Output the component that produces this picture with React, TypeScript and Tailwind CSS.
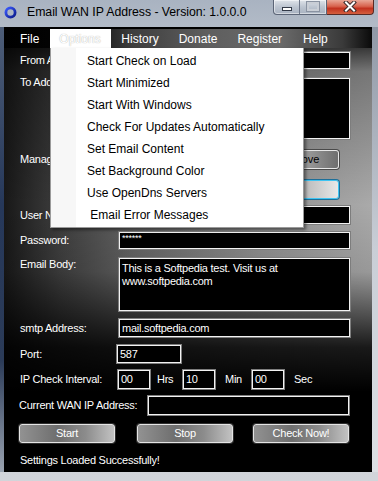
import React from "react";

const inputCls =
  "bg-black text-white border border-[#f2f2f2] shadow-[0_0_0_1px_#7d7d7d] text-[11px] tracking-[-0.25px] leading-[13px] pl-[2px] flex items-center";

const labelCls = "w-[99px] shrink-0 text-white text-[11px] tracking-[-0.25px] leading-[13px] whitespace-nowrap";

const btnCls =
  "h-[19px] w-[96px] flex items-center justify-center rounded-[3px] border border-[#e4e4e4] shadow-[0_0_0_1px_#2e2e2e] bg-[linear-gradient(90deg,#929292_0%,#6e6e6e_40%,#8c8c8c_70%,#c2c2c2_100%)] text-white text-[11px] tracking-[-0.25px]";

const menuItems = [
  "Start Check on Load",
  "Start Minimized",
  "Start With Windows",
  "Check For Updates Automatically",
  "Set Email Content",
  "Set Background Color",
  "Use OpenDns Servers",
  " Email Error Messages",
];

export default function App() {
  return (
    <div className="w-[378px] h-[481px] overflow-hidden flex flex-col font-['Liberation_Sans',Arial,sans-serif] bg-[linear-gradient(180deg,#a9b3c1_0%,#b9c1cc_10%,#c6ccd4_60%,#d2d5da_100%)]">
      {/* Title bar */}
      <div className="h-[27px] flex items-start shrink-0 relative">
        <svg className="mt-[6px] ml-[4px] w-[13px] h-[13px]" viewBox="0 0 13 13">
          <defs>
            <linearGradient id="ring" x1="0" y1="0" x2="1" y2="1">
              <stop offset="0" stopColor="#3b5bff" />
              <stop offset="1" stopColor="#0a1a8a" />
            </linearGradient>
          </defs>
          <circle cx="6.5" cy="6.5" r="4.6" fill="none" stroke="url(#ring)" strokeWidth="2.8" />
        </svg>
        <div className="ml-[10px] mt-[5px] text-[12.3px] leading-[14px] tracking-[-0.05px] text-black whitespace-nowrap">
          Email WAN IP Address - Version: 1.0.0.0
        </div>
        <div className="ml-auto mr-[4px] flex">
          <div className="w-[54px] h-[15px] flex rounded-bl-[4px] border border-t-0 border-[#5c6577] bg-[linear-gradient(180deg,#dfe4ea_0%,#bcc4d0_50%,#a8b2c0_100%)] shadow-[inset_0_0_0_1px_rgba(255,255,255,0.5)]">
            <div className="w-[27px] h-full flex items-center justify-center border-r border-[#6d7688]">
              <div className="w-[10px] h-[4px] mt-[4px] bg-white border border-[#333a48]" />
            </div>
            <div className="w-[27px] h-full flex items-center justify-center">
              <div className="w-[12px] h-[9px] border-2 border-[#c9ced6] shadow-[0_0_0_1px_#8a93a2] mt-[-1px]" />
            </div>
          </div>
          <div className="w-[47px] h-[15px] flex items-center justify-center rounded-br-[4px] border border-t-0 border-l-0 border-[#5a2a24] bg-[linear-gradient(180deg,#e9a796_0%,#d8634e_45%,#c2321f_60%,#d4603f_100%)]">
            <svg width="14" height="11" viewBox="0 0 14 11" className="mt-[-1px]">
              <path d="M3 1.5 L11 9.5 M11 1.5 L3 9.5" stroke="#3a2a2a" strokeWidth="4" strokeLinecap="square" />
              <path d="M3 1.5 L11 9.5 M11 1.5 L3 9.5" stroke="#ffffff" strokeWidth="2" strokeLinecap="square" />
            </svg>
          </div>
        </div>
      </div>

      {/* Body row */}
      <div className="flex h-[445px] shrink-0">
        <div className="w-[4px] bg-[linear-gradient(180deg,#4d5d78_0%,#26385a_40%,#2b3b58_75%,#9aa3b0_100%)]" />
        <div className="w-[368px] h-full relative overflow-visible bg-[linear-gradient(180deg,#000_0%,rgba(0,0,0,0.3)_10%,rgba(0,0,0,0)_40%,rgba(0,0,0,0.1)_55%,rgba(0,0,0,0.85)_72%,#000_82%),linear-gradient(90deg,#181818_0%,#3e3e3e_15%,#646464_35%,#909090_70%,#aaaaaa_100%)]">
          {/* Menu bar */}
          <div className="h-[21px] flex items-center text-white text-[12px] leading-[14px] bg-[linear-gradient(90deg,#000_0%,#050505_20%,#3e3e3e_35%,#5e5e5e_55%,#6a6a6a_75%,#3a3a3a_92%,#0a0a0a_100%)] border-t-[2px] border-black">
            <span className="ml-[16px]">File</span>
            <div className="ml-[11px] h-[19px] w-[61px] self-end bg-white flex items-center pl-[9px] text-white [text-shadow:0_0_1px_#9a9a9a]">
              Options
            </div>
            <span className="ml-[10px]">History</span>
            <span className="ml-[20px]">Donate</span>
            <span className="ml-[20px]">Register</span>
            <span className="ml-[21px]">Help</span>
          </div>

          {/* Form */}
          <div className="pl-[16px] flex flex-col">
            <div className="mt-[4px] h-[17px] flex items-center">
              <div className={labelCls}>From Address:</div>
              <div className={`${inputCls} w-[231px] h-[17px]`} />
            </div>
            <div className="mt-[9px] flex items-start">
              <div className={`${labelCls} mt-[-2px]`}>To Address:</div>
              <div className={`${inputCls} w-[231px] h-[61px]`} />
            </div>
            <div className="mt-[11px] h-[19px] flex items-center">
              <div className={labelCls}>Manage Addresses:</div>
              <div className="ml-[138px] w-[82px] h-[19px] flex items-center justify-center rounded-[3px] border border-[#e6e6e6] shadow-[0_0_0_1px_#4a4a4a] bg-[linear-gradient(90deg,#c8c8c8_0%,#a6a6a6_50%,#6e6e6e_100%)] text-[11px] text-black pl-[2px]">
                Remove
              </div>
            </div>
            <div className="mt-[11px] h-[19px] flex items-center">
              <div className="ml-[237px] w-[82px] h-[19px] rounded-[3px] border border-[#3fc4f2] shadow-[0_0_0_1px_#1d6f99] bg-[linear-gradient(90deg,#d8d8d8_0%,#b2b2b2_50%,#e8e8e8_100%)]" />
            </div>
            <div className="mt-[7px] h-[18px] flex items-center">
              <div className={labelCls}>User Name:</div>
              <div className={`${inputCls} w-[231px] h-[18px]`} />
            </div>
            <div className="mt-[8px] h-[17px] flex items-center">
              <div className={labelCls}>Password:</div>
              <div className={`${inputCls} w-[231px] h-[17px] items-start`}>
                <span className="text-[9px] leading-[9px] mt-[1px]">******</span>
              </div>
            </div>
            <div className="mt-[9px] flex items-start">
              <div className={`${labelCls} mt-[0px]`}>Email Body:</div>
              <div className={`${inputCls} w-[231px] h-[53px] items-start pt-[3px] flex-col`}>
                <span>This is a Softpedia test. Visit us at</span>
                <span>www.softpedia.com</span>
              </div>
            </div>
            <div className="mt-[8px] h-[18px] flex items-center">
              <div className={labelCls}>smtp Address:</div>
              <div className={`${inputCls} w-[231px] h-[18px]`}>mail.softpedia.com</div>
            </div>
            <div className="mt-[8px] h-[18px] flex items-center">
              <div className="w-[97px] shrink-0 text-white text-[11px] tracking-[-0.25px]">Port:</div>
              <div className={`${inputCls} w-[64px] h-[18px]`}>587</div>
            </div>
            <div className="mt-[7px] h-[19px] flex items-center text-white text-[11px] tracking-[-0.25px]">
              <div className="w-[98px] shrink-0">IP Check Interval:</div>
              <div className={`${inputCls} w-[32px] h-[19px]`}>00</div>
              <span className="ml-[7px] w-[26px]">Hrs</span>
              <div className={`${inputCls} w-[32px] h-[19px]`}>10</div>
              <span className="ml-[10px] w-[27px]">Min</span>
              <div className={`${inputCls} w-[32px] h-[19px]`}>00</div>
              <span className="ml-[10px]">Sec</span>
            </div>
            <div className="mt-[7px] h-[19px] flex items-center text-white text-[11px] tracking-[-0.25px]">
              <div className="w-[129px] shrink-0 ml-[-1px]">Current WAN IP Address:</div>
              <div className={`${inputCls} w-[201px] h-[19px]`} />
            </div>
            <div className="mt-[9px] h-[19px] flex items-center ml-[-1px]">
              <div className={btnCls}>Start</div>
              <div className={`${btnCls} ml-[22px]`}>Stop</div>
              <div className={`${btnCls} ml-[20px]`}>Check Now!</div>
            </div>
            <div className="mt-[11px] text-white text-[11px] tracking-[-0.25px] leading-[13px]">
              Settings Loaded Successfully!
            </div>
          </div>

          {/* Dropdown */}
          <div className="absolute left-[46px] top-[21px] w-[254px] h-[180px] bg-white border border-t-0 border-[#9a9a9a] shadow-[2px_2px_3px_rgba(0,0,0,0.45)] flex">
            <div className="w-[25px] h-full bg-[#f7f7f7]" />
            <div className="flex flex-col pt-[2px]">
              {menuItems.map((m) => (
                <div key={m} className="h-[22px] flex items-center pl-[11px] text-black text-[12px] leading-[14px] whitespace-pre">
                  {m}
                </div>
              ))}
            </div>
          </div>
        </div>
        <div className="w-[6px] bg-[linear-gradient(180deg,#8f98a6_0%,#c9ced6_50%,#dcdfe3_100%)]" />
      </div>
    </div>
  );
}
